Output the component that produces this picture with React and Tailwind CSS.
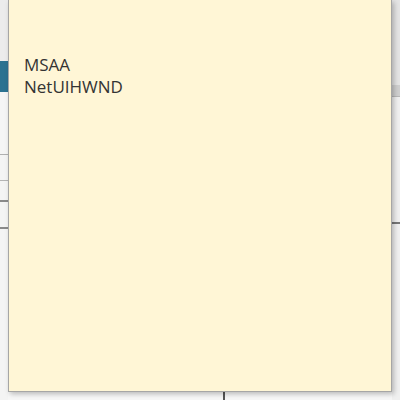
import React from 'react';

const App = () => {
  return (
    <div className="relative w-[400px] h-[400px] overflow-hidden bg-[#f7f7f7] font-['Open_Sans','Noto_Sans',sans-serif]">
      {/* window behind the tooltip */}
      <div className="flex w-full h-full">
        <div className="flex flex-col w-[8px] h-full bg-[#f4f4f4]">
          <div className="h-[61px] bg-[#ececec]" />
          <div className="h-[31px] bg-[#2b7291]" />
          <div className="h-[63px] bg-[#f5f5f5] border-b border-[#b0b0b0]" />
          <div className="h-[26px] border-b border-[#b4b4b4]" />
          <div className="h-[21px] border-b-2 border-[#8a8a8a]" />
          <div className="h-[27px] border-b-2 border-[#8a8a8a]" />
          <div className="flex-1" />
        </div>
        <div className="flex-1 flex flex-col">
          <div className="flex-1" />
          <div className="h-[9px] flex">
            <div className="w-[215px]" />
            <div className="w-[2px] bg-[#555]" />
          </div>
        </div>
        <div className="flex flex-col w-[8px] h-full bg-[#f0f0f0]">
          <div className="h-[85px] bg-[#e4e4e4]" />
          <div className="h-[12px] bg-[#cfcfcf] border-b border-[#b8b8b8]" />
          <div className="h-[125px]" />
          <div className="h-[2px] border-t-2 border-dashed border-[#777]" />
          <div className="flex-1" />
        </div>
      </div>

      {/* tooltip */}
      <div className="absolute left-[8px] top-0 w-[384px] h-[392px] bg-[#fff6d6] border border-[#a6a6a6] border-t-0 shadow-[2px_2px_5px_rgba(0,0,0,0.25)] pt-[54px] pl-[15px]">
        <div className="text-[17px] leading-[22px] text-[#333333]">MSAA</div>
        <div className="text-[17px] leading-[22px] text-[#333333]">NetUIHWND</div>
      </div>
    </div>
  );
};

export default App;
